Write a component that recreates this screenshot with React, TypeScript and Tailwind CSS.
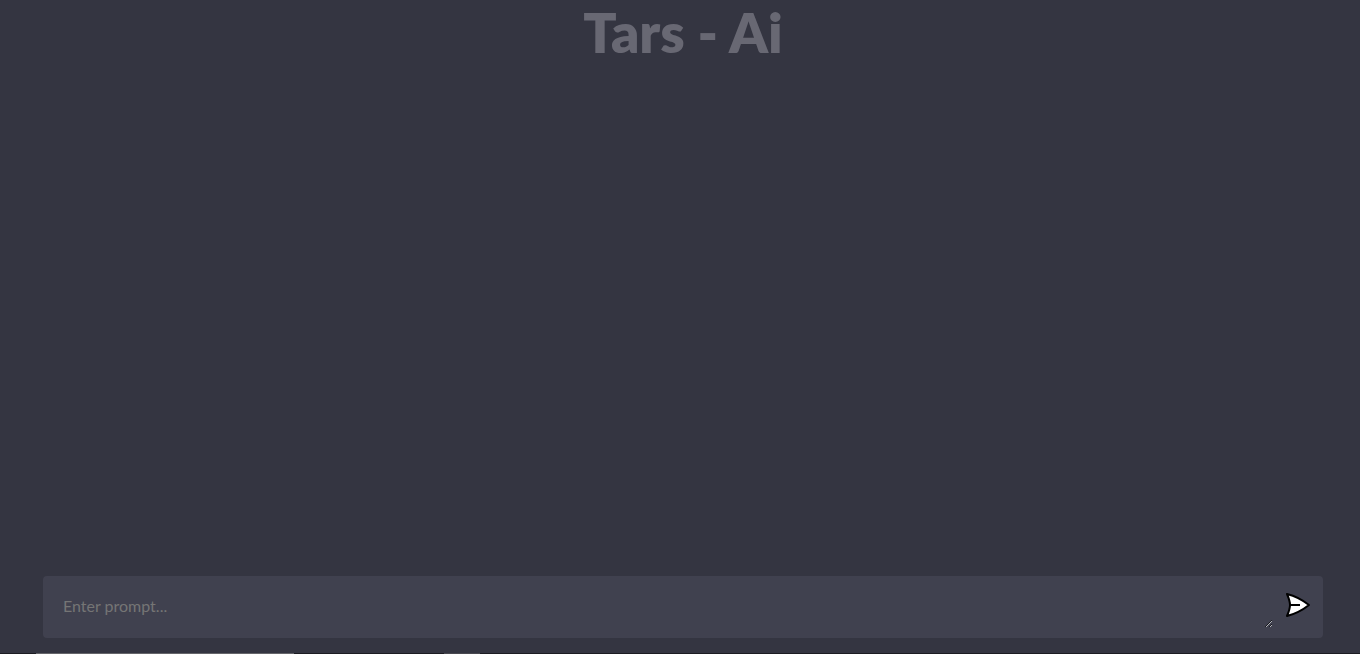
import { useState } from "react";

function SendIcon() {
  return (
    <svg viewBox="0 0 30 30" className="size-[30px]" aria-hidden="true">
      <path
        d="M4 4C12 6 19 9.500 26 15C19 20.5 12 24 4 26C5.500 22.5 7 19 7 15C7 11 5.500 7.500 4 4Z"
        fill="#fff"
        stroke="#000"
        strokeWidth="2"
        strokeLinejoin="round"
      />
      <path d="M7 15H17" stroke="#000" strokeWidth="2" />
    </svg>
  );
}

export default function App() {
  const [prompt, setPrompt] = useState("");
  return (
    <div className="flex h-screen flex-col overflow-hidden bg-[#343541] font-['Lato',sans-serif]">
      <main className="flex min-h-0 flex-1 flex-col pr-[37px] pb-[15px] pl-[43px]">
        <h1 className="text-center text-[55px] leading-[64px] font-extrabold text-[#686873]">
          Tars - Ai
        </h1>
        <div className="flex-1" />
        <form
          className="flex items-center rounded bg-[#40414f] p-[10px]"
          onSubmit={(e) => e.preventDefault()}
        >
          <textarea
            aria-label="Prompt"
            rows={1}
            placeholder="Enter prompt..."
            value={prompt}
            onChange={(e) => setPrompt(e.target.value)}
            className="block h-[42px] min-w-0 flex-1 resize bg-transparent p-[10px] text-base leading-5 text-white outline-none placeholder:text-[#757575]"
          />
          <button type="submit" aria-label="Send" className="pb-1 pl-[10px]">
            <SendIcon />
          </button>
        </form>
      </main>
      <div className="flex h-px bg-[#1c1c22]">
        <div className="ml-9 w-[258px] bg-[#65656a]" />
        <div className="ml-[150px] w-9 bg-[#48484f]" />
      </div>
    </div>
  );
}
